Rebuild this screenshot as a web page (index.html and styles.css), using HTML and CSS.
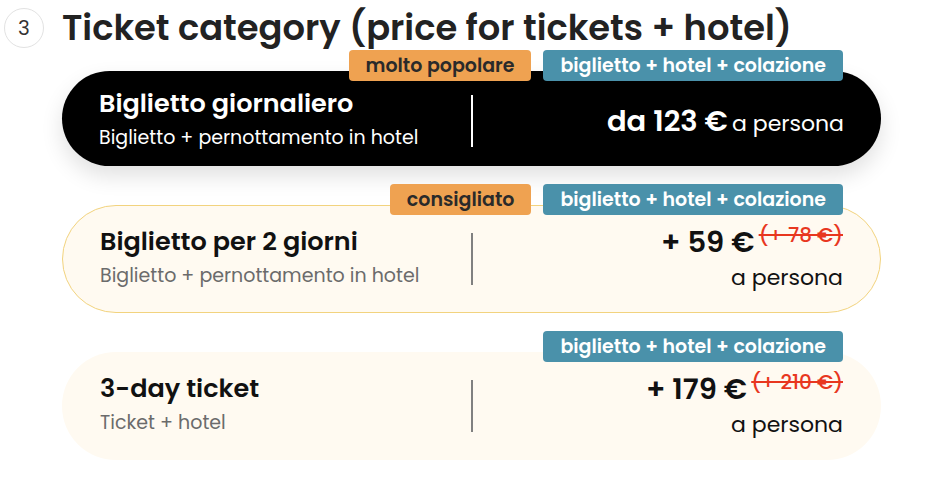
FILE: index.html
```html
<!DOCTYPE html>
<html lang="it">
<head>
<meta charset="utf-8">
<link rel="stylesheet" href="styles.css">
</head>
<body>
<section class="step">
  <header class="step-head">
    <span class="step-num">3</span>
    <h2 class="step-title">Ticket category (price for tickets + hotel)</h2>
  </header>
  <div class="options">
    <div class="option option--selected">
      <div class="badges">
        <span class="badge badge--orange">molto popolare</span>
        <span class="badge badge--teal">biglietto + hotel + colazione</span>
      </div>
      <div class="option-info">
        <div class="option-title">Biglietto giornaliero</div>
        <div class="option-sub">Biglietto + pernottamento in hotel</div>
      </div>
      <div class="divider"></div>
      <div class="option-price">
        <span class="price">da 123 €</span> <span class="per">a persona</span>
      </div>
    </div>

    <div class="option option--recommended">
      <div class="badges">
        <span class="badge badge--orange">consigliato</span>
        <span class="badge badge--teal">biglietto + hotel + colazione</span>
      </div>
      <div class="option-info">
        <div class="option-title">Biglietto per 2 giorni</div>
        <div class="option-sub">Biglietto + pernottamento in hotel</div>
      </div>
      <div class="divider"></div>
      <div class="option-price option-price--stack">
        <div class="price-line"><span class="price">+ 59 €</span> <s class="old">(+ 78 €)</s></div>
        <div class="per">a persona</div>
      </div>
    </div>

    <div class="option">
      <div class="badges">
        <span class="badge badge--teal">biglietto + hotel + colazione</span>
      </div>
      <div class="option-info">
        <div class="option-title">3-day ticket</div>
        <div class="option-sub">Ticket + hotel</div>
      </div>
      <div class="divider"></div>
      <div class="option-price option-price--stack">
        <div class="price-line"><span class="price">+ 179 €</span> <s class="old">(+ 210 €)</s></div>
        <div class="per">a persona</div>
      </div>
    </div>
  </div>
</section>
</body>
</html>
```
FILE: styles.css
```css
* { box-sizing: border-box; }
html, body { margin: 0; background: #fff; }
body {
  font-family: Poppins, "Open Sans", "DejaVu Sans", sans-serif;
  color: #111;
}
.step { padding: 8px 0 0 4px; }
.step-head {
  display: flex;
  align-items: center;
  gap: 18px;
}
.step-num {
  width: 40px;
  height: 40px;
  flex: none;
  border: 1px solid #e2e2e2;
  border-radius: 50%;
  display: flex;
  align-items: center;
  justify-content: center;
  font-size: 20px;
  color: #333;
}
.step-title {
  margin: 0;
  font-size: 35.3px;
  font-weight: 600;
  color: #222;
  line-height: 40px;
  white-space: nowrap;
}
.options {
  margin: 23px 0 0 58px;
  width: 819px;
  display: flex;
  flex-direction: column;
  gap: 39px;
}
.option {
  position: relative;
  display: grid;
  grid-template-columns: 1fr 2px 1fr;
  align-items: center;
  padding: 17px 37px;
  border-radius: 60px;
  background: #fffaf1;
  border: 1px solid transparent;
}
.option--selected {
  background: #000;
  color: #fff;
  border: 0;
  padding-top: 15px;
  padding-bottom: 10px;
  box-shadow: 0 10px 22px rgba(0,0,0,0.12);
}
.option--recommended { border-color: #f2d37e; }
.badges {
  position: absolute;
  top: -22px;
  right: 37px;
  display: flex;
  gap: 12px;
}
.option--selected .badges { right: 38px; top: -21px; }
.badge {
  height: 31px;
  padding: 0 17px;
  border-radius: 4px;
  font-size: 19px;
  font-weight: 600;
  line-height: 32px;
  white-space: nowrap;
}
.badge--orange { background: #efa251; color: #2a2a2a; }
.badge--teal { background: #4a91aa; color: #fff; }
.option-title {
  font-size: 25.5px;
  font-weight: 600;
  line-height: 34px;
}
.option-sub {
  font-size: 19px;
  line-height: 36px;
  color: #6b6b6b;
}
.option--selected .option-sub { color: #fff; }
.divider {
  height: 52px;
  background: #808080;
}
.option--selected .divider { background: #fff; }
.option-price {
  text-align: right;
}
.price {
  font-size: 29px;
  font-weight: 600;
}
.per { font-size: 22px; }
.option-price--stack .price-line { height: 38px; line-height: 38px; }
.option-price--stack .per { height: 34px; line-height: 34px; }
.old {
  color: #e8371f;
  font-size: 20px;
  font-weight: 500;
  line-height: 1;
  vertical-align: 10px;
  text-decoration-thickness: 2px;
}
```
